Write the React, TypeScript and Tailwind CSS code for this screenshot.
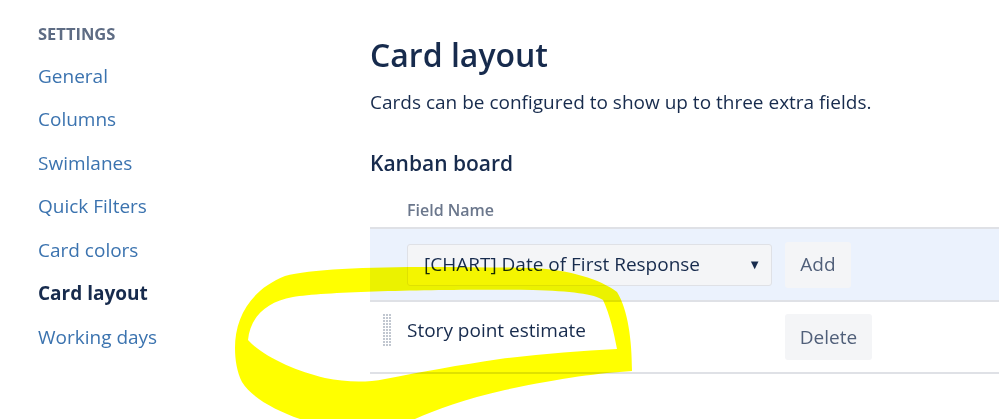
const navItems = [
  { label: "General" },
  { label: "Columns" },
  { label: "Swimlanes" },
  { label: "Quick Filters" },
  { label: "Card colors" },
  { label: "Card layout", active: true },
  { label: "Working days" },
];

function DragHandle() {
  const dots = [];
  for (let r = 0; r < 11; r++) {
    for (let c = 0; c < 3; c++) {
      dots.push(<rect key={`${r}-${c}`} x={c * 3} y={r * 3} width="2" height="2" fill="#c1c7d0" />);
    }
  }
  return (
    <svg width="9" height="33" viewBox="0 0 9 33" className="shrink-0">
      {dots}
    </svg>
  );
}

function Scribble() {
  return (
    <svg
      width="999"
      height="419"
      viewBox="0 0 999 419"
      className="absolute inset-0 pointer-events-none mix-blend-multiply"
    >
      <path
        fillRule="evenodd"
        fill="#ffff00"
        d="M 235 348 C 235 318, 250 290, 285 276 C 320 266, 420 266, 533 268 C 570 270, 600 279, 617 292 C 628 310, 632 340, 632 371 C 600 373, 560 378, 505 390 C 465 399, 435 410, 415 419 L 300 419 C 275 410, 252 398, 242 382 C 237 372, 235 360, 235 348 Z M 248 340 C 250 318, 265 302, 293 297 C 330 291, 450 289, 533 290 C 570 291, 595 294, 603 300 C 610 315, 614 333, 617 349 C 580 351, 540 354, 500 359 C 460 365, 420 372, 385 379 C 365 383, 345 382, 325 378 C 295 371, 262 356, 248 340 Z"
      />
    </svg>
  );
}

export default function App() {
  return (
    <div
      className="relative w-[999px] h-[419px] overflow-hidden bg-white flex text-[#172b4d]"
      style={{ fontFamily: '"Open Sans", "Noto Sans", sans-serif' }}
    >
      <aside className="w-[370px] shrink-0 pl-[38px] pt-[24px]">
        <div className="h-[20px] leading-[20px] text-[16.5px] font-bold text-[#5e6c84]">
          SETTINGS
        </div>
        <ul className="mt-[10px]">
          {navItems.map((item) => (
            <li
              key={item.label}
              className={`h-[43.5px] flex items-center text-[19px] ${
                item.active ? "font-bold text-[#172b4d]" : "text-[#3b73af]"
              }`}
            >
              {item.label}
            </li>
          ))}
        </ul>
      </aside>

      <main className="flex-1 pt-[35px]">
        <h1 className="h-[40px] leading-[40px] text-[32px] font-semibold text-[#172b4d]">
          Card layout
        </h1>
        <p className="mt-[15px] leading-[24px] text-[19px] text-[#172b4d]">
          Cards can be configured to show up to three extra fields.
        </p>
        <h2 className="mt-[35px] leading-[28px] text-[21px] font-semibold text-[#172b4d]">
          Kanban board
        </h2>
        <div className="mt-[23px] ml-[37px] leading-[20px] text-[16px] font-semibold text-[#6b778c]">
          Field Name
        </div>

        <div className="mt-[7px] border-t-2 border-[#dfe1e6]">
          <div className="h-[73px] bg-[#ebf2fd] flex items-center pl-[37px] border-b-2 border-[#dfe1e6]">
            <div className="w-[365px] h-[42px] rounded-[3px] border border-[#dfe1e6] bg-[#f4f5f7] flex items-center justify-between pl-[16px] pr-[10px]">
              <span className="text-[19px] text-[#172b4d]">[CHART] Date of First Response</span>
              <span className="text-[13px] text-[#172b4d]">▼</span>
            </div>
            <button className="ml-[13px] w-[66px] h-[46px] rounded-[3px] bg-[#f4f5f7] text-[19px] text-[#505f79]">
              Add
            </button>
          </div>
          <div className="h-[72px] flex pl-[13px] border-b-2 border-[#dfe1e6]">
            <div className="pt-[12px]">
              <DragHandle />
            </div>
            <div className="w-[393px] pl-[15px] pt-[16px] leading-[24px] text-[19px] text-[#172b4d]">
              Story point estimate
            </div>
            <div className="pt-[12px]">
              <button className="w-[87px] h-[46px] rounded-[3px] bg-[#f4f5f7] text-[19px] text-[#505f79]">
                Delete
              </button>
            </div>
          </div>
        </div>
      </main>

      <Scribble />
    </div>
  );
}
